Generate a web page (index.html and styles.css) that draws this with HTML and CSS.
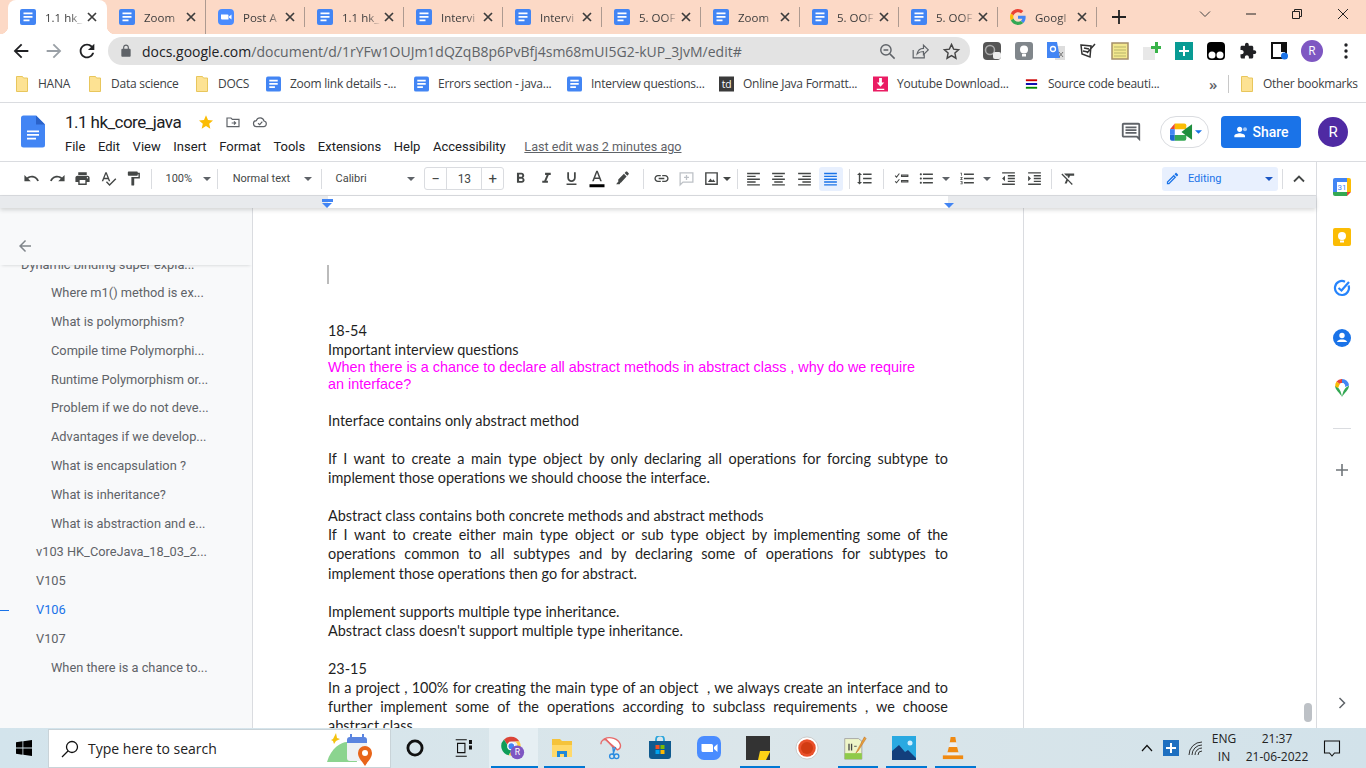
FILE: index.html
```html
<!DOCTYPE html>
<html lang="en">
<head>
  <meta charset="UTF-8" />
  <title>1.1 hk_core_java - Google Docs</title>
  <link rel="stylesheet" href="styles.css">
</head>
<body>

  <!-- shared icons -->
  <svg class="defs" width="0" height="0">
    <symbol id="doc" viewBox="0 0 16 16">
      <rect width="16" height="16" rx="2" fill="#4285f4"/>
      <path d="M3.5 3.5h9v1.7h-9zM3.5 7h9v1.7h-9zM3.5 10.5h6v1.7h-6z" fill="#fff"/>
    </symbol>
    <symbol id="folder" viewBox="0 0 12 16">
      <path d="M.5.5h6l1 1.5h4v13.5h-11z" fill="#fde293" stroke="#e8c65c"/>
    </symbol>
    <symbol id="x" viewBox="0 0 12 12">
      <path d="M2 2l8 8M10 2l-8 8" stroke="#3c3c3c" stroke-width="1.7" fill="none"/>
    </symbol>
    <symbol id="caret" viewBox="0 0 10 5">
      <path d="M0 0h10L5 5z"/>
    </symbol>
    <symbol id="g" viewBox="0 0 48 48">
      <path fill="#EA4335" d="M24 9.5c3.54 0 6.71 1.22 9.21 3.6l6.85-6.85C35.9 2.38 30.47 0 24 0 14.62 0 6.51 5.38 2.56 13.22l7.98 6.19C12.43 13.72 17.74 9.5 24 9.5z"/>
      <path fill="#4285F4" d="M46.98 24.55c0-1.57-.15-3.09-.38-4.55H24v9.02h12.94c-.58 2.96-2.26 5.48-4.78 7.18l7.73 6c4.51-4.18 7.09-10.36 7.09-17.65z"/>
      <path fill="#FBBC05" d="M10.53 28.59c-.48-1.45-.76-2.99-.76-4.59s.27-3.14.76-4.59l-7.98-6.19C.92 16.46 0 20.12 0 24c0 3.88.92 7.54 2.56 10.78l7.97-6.19z"/>
      <path fill="#34A853" d="M24 48c6.48 0 11.93-2.13 15.89-5.81l-7.73-6c-2.15 1.45-4.92 2.3-8.16 2.3-6.26 0-11.57-4.22-13.47-9.91l-7.98 6.19C6.51 42.62 14.62 48 24 48z"/>
    </symbol>
  </svg>

  <!-- tab strip -->
  <div class="tabstrip">
    <div class="tabs">
      <div class="tab active"><svg class="favicon"><use href="#doc"/></svg><span class="tab-title">1.1 hk_</span><svg class="tab-x"><use href="#x"/></svg></div>
      <div class="tab nosep"><svg class="favicon"><use href="#doc"/></svg><span class="tab-title">Zoom</span><svg class="tab-x"><use href="#x"/></svg></div>
      <div class="tab"><svg class="favicon" viewBox="0 0 16 16"><rect width="16" height="16" rx="4" fill="#4a8cff"/><path d="M3 5.5h6.5a1 1 0 0 1 1 1v4H4a1 1 0 0 1-1-1zM11 7.500l2.500-2v5l-2.500-2z" fill="#fff"/></svg><span class="tab-title">Post A</span><svg class="tab-x"><use href="#x"/></svg></div>
      <div class="tab"><svg class="favicon"><use href="#doc"/></svg><span class="tab-title">1.1 hk_</span><svg class="tab-x"><use href="#x"/></svg></div>
      <div class="tab"><svg class="favicon"><use href="#doc"/></svg><span class="tab-title">Intervi</span><svg class="tab-x"><use href="#x"/></svg></div>
      <div class="tab"><svg class="favicon"><use href="#doc"/></svg><span class="tab-title">Intervi</span><svg class="tab-x"><use href="#x"/></svg></div>
      <div class="tab"><svg class="favicon"><use href="#doc"/></svg><span class="tab-title">5. OOF</span><svg class="tab-x"><use href="#x"/></svg></div>
      <div class="tab"><svg class="favicon"><use href="#doc"/></svg><span class="tab-title">Zoom</span><svg class="tab-x"><use href="#x"/></svg></div>
      <div class="tab"><svg class="favicon"><use href="#doc"/></svg><span class="tab-title">5. OOF</span><svg class="tab-x"><use href="#x"/></svg></div>
      <div class="tab"><svg class="favicon"><use href="#doc"/></svg><span class="tab-title">5. OOF</span><svg class="tab-x"><use href="#x"/></svg></div>
      <div class="tab"><svg class="favicon"><use href="#g"/></svg><span class="tab-title">Googl</span><svg class="tab-x"><use href="#x"/></svg></div>
    </div>
    <svg class="newtab" viewBox="0 0 14 14"><path d="M7 0v14M0 7h14" stroke="#222" stroke-width="1.8"/></svg>
    <div class="winbtns">
      <svg viewBox="0 0 12 12"><path d="M1 3.5l5 5 5-5" fill="none" stroke="#444"/></svg>
      <svg viewBox="0 0 12 12"><path d="M1 6h10" stroke="#222"/></svg>
      <svg viewBox="0 0 12 12"><path d="M1.5 3.5h7v7h-7zM3.5 3.5v-2h7v7h-2" fill="none" stroke="#222"/></svg>
      <svg viewBox="0 0 12 12"><path d="M1 1l10 10M11 1L1 11" stroke="#222"/></svg>
    </div>
  </div>

  <!-- address bar -->
  <div class="navbar">
    <div class="navbtns">
      <svg viewBox="0 0 24 24" fill="#202124"><path d="M20 11H7.83l5.59-5.59L12 4l-8 8 8 8 1.41-1.41L7.83 13H20v-2z"/></svg>
      <svg viewBox="0 0 24 24" fill="#9aa0a6"><path d="M12 4l-1.41 1.41L16.17 11H4v2h12.17l-5.58 5.59L12 20l8-8z"/></svg>
      <svg viewBox="0 0 24 24" fill="#202124"><path d="M17.65 6.35C16.2 4.9 14.21 4 12 4c-4.42 0-7.99 3.58-7.99 8s3.57 8 7.99 8c3.73 0 6.84-2.55 7.73-6h-2.08c-.82 2.33-3.04 4-5.65 4-3.31 0-6-2.69-6-6s2.69-6 6-6c1.66 0 3.14.69 4.22 1.78L13 11h7V4l-2.35 2.35z"/></svg>
    </div>
    <div class="omnibox">
      <svg class="lock" viewBox="0 0 24 24" fill="#5f6368"><path d="M18 8h-1V6c0-2.76-2.24-5-5-5S7 3.24 7 6v2H6c-1.1 0-2 .9-2 2v10c0 1.1.9 2 2 2h12c1.1 0 2-.9 2-2V10c0-1.1-.9-2-2-2zM9 6c0-1.66 1.34-3 3-3s3 1.34 3 3v2H9V6z"/></svg>
      <span class="url"><b>docs.google.com</b>/document/d/1rYFw1OUJm1dQZqB8p6PvBfj4sm68mUI5G2-kUP_3JvM/edit#</span>
      <div class="omni-icons">
        <svg viewBox="0 0 24 24" fill="none" stroke="#5f6368" stroke-width="1.8"><circle cx="10" cy="10" r="6.5"/><path d="M15 15l6 6M7 10h6"/></svg>
        <svg viewBox="0 0 24 24" fill="none" stroke="#5f6368" stroke-width="1.5"><path d="M4 10v10h14v-5M9 15c1-5 5-7 8-7V4l6 6-6 6v-4c-3 0-6 1-8 3z"/></svg>
        <svg viewBox="0 0 24 24" fill="none" stroke="#444" stroke-width="1.8"><path d="M12 3l2.7 6 6.3.7-4.7 4.3 1.3 6.5L12 17.200 6.400 20.500 7.700 14 3 9.700 9.300 9z"/></svg>
      </div>
    </div>
    <div class="extensions">
      <span class="ext"><svg viewBox="0 0 18 18"><rect width="18" height="18" rx="4" fill="#555"/><circle cx="7" cy="8" r="4.5" fill="none" stroke="#aaa" stroke-width="1.5"/><rect x="10" y="10" width="8" height="7" rx="2" fill="#eee"/></svg></span>
      <span class="ext"><svg viewBox="0 0 18 18"><rect width="18" height="18" rx="3" fill="#80868b"/><circle cx="9" cy="7.5" r="4" fill="#fff"/><rect x="7" y="12" width="4" height="2.5" fill="#fff"/></svg></span>
      <span class="ext"><svg viewBox="0 0 18 18"><path d="M8 4h10v14H8z" fill="#ddd"/><path d="M0 0h10l3 16H0z" fill="#4285f4"/><circle cx="6" cy="7" r="2.5" fill="none" stroke="#fff" stroke-width="1.3"/><path d="M12 10l4 5M16 10l-4 5" stroke="#777"/></svg></span>
      <span class="ext"><svg viewBox="0 0 18 18" fill="none" stroke="#333" stroke-width="1.5"><path d="M2 3l10 1-1 11-8-3zM5 6l5 1M4 9l5 1M16 2L8 11"/></svg></span>
      <span class="ext"><svg viewBox="0 0 18 18"><rect x="1" y="1" width="16" height="16" fill="#f3e88f" stroke="#a58e6a" stroke-width="1.5"/><path d="M3 5h12M3 8h12M3 11h12M3 14h12" stroke="#b7b36b"/></svg></span>
      <span class="ext"><svg viewBox="0 0 18 18"><path d="M0 5h12v13H0z" fill="#e8e8e8"/><path d="M12 0v4h-4v3h4v4h3V7h3V4h-3V0z" fill="#38b349"/></svg></span>
      <span class="ext"><svg viewBox="0 0 18 18"><rect width="18" height="18" fill="#089b94"/><path d="M9 4v10M4 9h10" stroke="#fff" stroke-width="2"/></svg></span>
      <span class="ext"><svg viewBox="0 0 18 18"><rect width="18" height="18" rx="4" fill="#000"/><circle cx="5" cy="13" r="3.5" fill="#fff"/><circle cx="13" cy="13" r="3.5" fill="#fff"/></svg></span>
      <span class="ext"><svg viewBox="0 0 24 24" fill="#202124"><path d="M20.5 11H19V7c0-1.1-.9-2-2-2h-4V3.5C13 2.12 11.88 1 10.5 1S8 2.12 8 3.5V5H4c-1.1 0-1.99.9-1.99 2v3.8H3.5c1.49 0 2.7 1.21 2.7 2.7s-1.21 2.7-2.7 2.7H2V20c0 1.1.9 2 2 2h3.8v-1.5c0-1.49 1.21-2.7 2.7-2.7 1.49 0 2.7 1.21 2.7 2.7V22H17c1.1 0 2-.9 2-2v-4h1.5c1.38 0 2.5-1.12 2.5-2.5S21.88 11 20.5 11z"/></svg></span>
      <span class="ext"><svg viewBox="0 0 18 18"><path d="M1 1h14v15H1z" fill="#fff" stroke="#111" stroke-width="2"/><path d="M10 1h5v9h-5z" fill="#111"/><circle cx="13.5" cy="14" r="3.5" fill="#1a73e8"/></svg></span>
    </div>
    <div class="profile">R</div>
    <svg class="dots" viewBox="0 0 4 16"><circle cx="2" cy="2" r="1.7"/><circle cx="2" cy="8" r="1.7"/><circle cx="2" cy="14" r="1.7"/></svg>
  </div>

  <!-- bookmarks -->
  <div class="bookmarks">
    <span class="bm bm-folder bm-hana"><svg><use href="#folder"/></svg>HANA</span>
    <span class="bm bm-folder bm-ds"><svg><use href="#folder"/></svg>Data science</span>
    <span class="bm bm-folder bm-docs"><svg><use href="#folder"/></svg>DOCS</span>
    <span class="bm bm-zoom"><svg><use href="#doc"/></svg>Zoom link details -...</span>
    <span class="bm bm-err"><svg><use href="#doc"/></svg>Errors section - java...</span>
    <span class="bm bm-int"><svg><use href="#doc"/></svg>Interview questions...</span>
    <span class="bm bm-td"><svg viewBox="0 0 16 16"><rect width="16" height="16" fill="#3a3a3a"/><text x="8" y="12" class="td-text">td</text></svg>Online Java Formatt...</span>
    <span class="bm bm-yt"><svg viewBox="0 0 16 16"><rect width="16" height="16" fill="#ea1c63"/><path d="M6.5 1.5h3v5h2.500L8 11 4 6.500h2.500zM4 13h8v1.500H4z" fill="#fff"/></svg>Youtube Download...</span>
    <span class="bm bm-src"><svg viewBox="0 0 16 16"><path d="M2 3h12v2H2z" fill="#c00"/><path d="M2 7h12v2H2z" fill="#00a"/><path d="M2 11h12v2H2z" fill="#080"/></svg>Source code beauti...</span>
    <span class="bm-more">»</span>
    <span class="bm-sep"></span>
    <span class="bm bm-folder"><svg><use href="#folder"/></svg>Other bookmarks</span>
  </div>

  <!-- docs header -->
  <div class="docs-head">
    <svg class="docs-logo" viewBox="0 0 24 32">
      <path d="M15 0H2.5A2.5 2.5 0 0 0 0 2.5v27A2.5 2.5 0 0 0 2.5 32h19a2.5 2.5 0 0 0 2.5-2.5V9z" fill="#4285f4"/>
      <path d="M15 0l9 9h-9z" fill="#2a62c9"/>
      <path d="M6 15h12v1.7H6zM6 18.6h12v1.7H6zM6 22.2h9v1.7H6z" fill="#fff"/>
    </svg>
    <div class="docs-title">
      <div class="title-row">
        <span class="doc-name">1.1 hk_core_java</span>
        <svg viewBox="0 0 24 24" fill="#fbbc04"><path d="M12 2l3 6.9 7.500.7-5.700 5 1.700 7.400L12 18.100 5.500 22l1.700-7.400-5.700-5L9 8.900z"/></svg>
        <svg viewBox="0 0 24 24" fill="none" stroke="#5f6368" stroke-width="1.8"><path d="M3 6h6l2 2h10v11H3zM10 13.5h6M13.5 11l2.5 2.5-2.5 2.5"/></svg>
        <svg viewBox="0 0 24 24" fill="none" stroke="#5f6368" stroke-width="1.8"><path d="M7 19a4.5 4.5 0 0 1-.5-9 6 6 0 0 1 11.5.5A4.300 4.300 0 0 1 17.500 19zM9 14l2.500 2 4-4.500"/></svg>
      </div>
      <div class="menu-row">
        <span>File</span><span>Edit</span><span>View</span><span>Insert</span><span>Format</span><span>Tools</span><span>Extensions</span><span>Help</span><span>Accessibility</span>
        <span class="last-edit">Last edit was 2 minutes ago</span>
      </div>
    </div>
    <div class="head-actions">
      <svg class="comments" viewBox="0 0 24 24" fill="#5f6368"><path d="M21.99 4c0-1.1-.89-2-1.99-2H4c-1.1 0-2 .9-2 2v12c0 1.1.9 2 2 2h14l4 4-.01-18zM20 4v13.17L18.83 16H4V4h16zM6 12h12v2H6zm0-3h12v2H6zm0-3h12v2H6z"/></svg>
      <div class="meet">
        <svg viewBox="0 0 24 18">
          <path d="M0 6l5-6v6z" fill="#ea4335"/>
          <path d="M0 6h5v6H0z" fill="#4285f4"/>
          <path d="M0 12h5v6H2a2 2 0 0 1-2-2z" fill="#1967d2"/>
          <path d="M5 0h10a2 2 0 0 1 2 2v4H5z" fill="#fbbc04"/>
          <path d="M5 12h12v4a2 2 0 0 1-2 2H5z" fill="#34a853"/>
          <path d="M12 9l5-4v8zM17 5l6-4v16l-6-4z" fill="#1e8e3e"/>
        </svg>
        <svg class="meet-caret" fill="#1a73e8"><use href="#caret"/></svg>
      </div>
      <div class="share">
        <svg viewBox="0 0 24 24" fill="#fff"><path d="M10 12c2.21 0 4-1.79 4-4s-1.79-4-4-4-4 1.79-4 4 1.79 4 4 4zm0 2c-2.67 0-8 1.34-8 4v2h16v-2c0-2.66-5.33-4-8-4z"/><circle cx="18" cy="8" r="3" opacity=".6"/></svg>
        Share
      </div>
      <div class="account">R</div>
    </div>
  </div>

  <div class="docs-main">
    <div class="docs-left">

      <!-- formatting toolbar -->
      <div class="toolbar">
        <span class="tb"><svg viewBox="0 0 24 24"><path d="M12.5 8c-2.65 0-5.05.99-6.9 2.6L2 7v9h9l-3.62-3.62c1.39-1.16 3.16-1.88 5.12-1.88 3.54 0 6.55 2.31 7.6 5.5l2.37-.78C21.08 11.03 17.15 8 12.5 8z"/></svg></span>
        <span class="tb"><svg viewBox="0 0 24 24"><path d="M18.4 10.6C16.55 8.99 14.15 8 11.5 8c-4.65 0-8.58 3.03-9.96 7.22L3.9 16c1.05-3.19 4.05-5.5 7.6-5.5 1.95 0 3.73.72 5.12 1.88L13 16h9V7l-3.6 3.6z"/></svg></span>
        <span class="tb"><svg viewBox="0 0 24 24"><path d="M19 8H5c-1.66 0-3 1.34-3 3v6h4v4h12v-4h4v-6c0-1.66-1.34-3-3-3zm-3 11H8v-5h8v5zm3-7c-.55 0-1-.45-1-1s.45-1 1-1 1 .45 1 1-.45 1-1 1zm-1-9H6v4h12V3z"/></svg></span>
        <span class="tb"><svg viewBox="0 0 24 24"><path d="M12.45 16h2.09L9.43 3H7.57L2.46 16h2.09l1.12-3h5.64l1.14 3zm-6.02-5L8.5 5.48 10.57 11H6.43zm15.16.59l-8.09 8.09L9.83 16l-1.41 1.41 5.09 5.09L23 13l-1.41-1.41z"/></svg></span>
        <span class="tb"><svg viewBox="0 0 24 24"><path d="M18 4V3c0-.55-.45-1-1-1H5c-.55 0-1 .45-1 1v4c0 .55.45 1 1 1h12c.55 0 1-.45 1-1V6h1v4H9v11c0 .55.45 1 1 1h2c.55 0 1-.45 1-1v-9h8V4h-3z"/></svg></span>
        <span class="tb-sep"></span>
        <span class="tb-drop w-zoom">100%<svg><use href="#caret"/></svg></span>
        <span class="tb-sep"></span>
        <span class="tb-drop w-style">Normal text<svg><use href="#caret"/></svg></span>
        <span class="tb-sep"></span>
        <span class="tb-drop w-font">Calibri<svg><use href="#caret"/></svg></span>
        <span class="sizebox"><span>−</span><span class="size-val">13</span><span>+</span></span>
        <span class="tb b-first"><svg viewBox="0 0 24 24"><path d="M15.6 10.79c.97-.67 1.65-1.77 1.65-2.79 0-2.26-1.75-4-4-4H7v14h7.04c2.09 0 3.71-1.7 3.71-3.79 0-1.52-.86-2.82-2.15-3.42zM10 6.5h3c.83 0 1.5.67 1.5 1.5s-.67 1.5-1.5 1.5h-3v-3zm3.5 9H10v-3h3.5c.83 0 1.5.67 1.5 1.5s-.67 1.5-1.5 1.5z"/></svg></span>
        <span class="tb"><svg viewBox="0 0 24 24"><path d="M10 4v3h2.21l-3.42 8H6v3h8v-3h-2.21l3.42-8H18V4z"/></svg></span>
        <span class="tb"><svg viewBox="0 0 24 24"><path d="M12 17c3.31 0 6-2.69 6-6V3h-2.5v8c0 1.93-1.57 3.5-3.5 3.5S8.5 12.93 8.5 11V3H6v8c0 3.31 2.69 6 6 6zm-7 2v2h14v-2H5z"/></svg></span>
        <span class="tb tb-color"><svg viewBox="0 0 24 24"><path d="M11 1L5.5 15h2.25l1.12-3h6.25l1.12 3h2.25L13 1h-2zm-1.38 9L12 3.67 14.38 10H9.62z"/><path d="M2 19h20v4H2z" fill="#000"/></svg></span>
        <span class="tb tb-hl"><svg viewBox="0 0 24 24"><path d="M17.75 9L14 5.25l-8 8V17h-.5L3 20h5l1-2h.75zm2.96-2.96c.39-.39.39-1.02 0-1.41l-2.34-2.34c-.39-.39-1.02-.39-1.41 0L15 4.25 18.75 8z"/></svg></span>
        <span class="tb-sep"></span>
        <span class="tb"><svg viewBox="0 0 24 24"><path d="M3.9 12c0-1.71 1.39-3.1 3.1-3.1h4V7H7c-2.76 0-5 2.24-5 5s2.24 5 5 5h4v-1.9H7c-1.71 0-3.1-1.39-3.1-3.1zM8 13h8v-2H8v2zm9-6h-4v1.9h4c1.71 0 3.1 1.39 3.1 3.1s-1.39 3.1-3.1 3.1h-4V17h4c2.76 0 5-2.24 5-5s-2.24-5-5-5z"/></svg></span>
        <span class="tb faded"><svg viewBox="0 0 24 24"><path d="M3 4h18v13H7l-4 4zM12 7v7M8.5 10.5h7" fill="none" stroke="#bdc1c6" stroke-width="1.8"/></svg></span>
        <span class="tb tb-img"><svg viewBox="0 0 24 24"><path d="M4 4h16v16H4z" fill="none" stroke="#444746" stroke-width="2"/><path d="M7 17l3.5-5 2.5 3 1.5-2 3 4z"/></svg><svg class="img-caret"><use href="#caret"/></svg></span>
        <span class="tb-sep tight"></span>
        <span class="tb"><svg viewBox="0 0 24 24"><path d="M3 4h18v2H3zM3 8h12v2H3zM3 12h18v2H3zM3 16h12v2H3zM3 20h18v2H3z"/></svg></span>
        <span class="tb"><svg viewBox="0 0 24 24"><path d="M3 4h18v2H3zM6 8h12v2H6zM3 12h18v2H3zM6 16h12v2H6zM3 20h18v2H3z"/></svg></span>
        <span class="tb"><svg viewBox="0 0 24 24"><path d="M3 4h18v2H3zM9 8h12v2H9zM3 12h18v2H3zM9 16h12v2H9zM3 20h18v2H3z"/></svg></span>
        <span class="tb on"><svg viewBox="0 0 24 24"><path d="M3 4h18v2H3zM3 8h18v2H3zM3 12h18v2H3zM3 16h18v2H3zM3 20h18v2H3z"/></svg></span>
        <span class="tb-sep tight"></span>
        <span class="tb tb-spacing"><svg viewBox="0 0 24 24"><path d="M6 7h2.5L5 3.500 1.500 7H4v10H1.500L5 20.500 8.500 17H6V7zm4-2v2h12V5H10zm0 14h12v-2H10v2zm0-6h12v-2H10v2z"/></svg></span>
        <span class="tb-sep"></span>
        <span class="tb"><svg viewBox="0 0 24 24"><path d="M12 7h9v2h-9zM12 15h9v2h-9zM3 8l2 2 4-5M3 16l2 2 4-5" fill="none" stroke="#444746" stroke-width="1.5"/></svg></span>
        <span class="tb"><svg viewBox="0 0 24 24"><path d="M4 10.5c-.83 0-1.5.67-1.5 1.5s.67 1.5 1.5 1.5 1.5-.67 1.5-1.5-.67-1.5-1.5-1.5zm0-6c-.83 0-1.5.67-1.5 1.5S3.17 7.5 4 7.5 5.5 6.83 5.5 6 4.83 4.5 4 4.5zm0 12c-.83 0-1.5.68-1.5 1.5s.68 1.5 1.5 1.5 1.5-.68 1.5-1.5-.67-1.5-1.5-1.5zM7 19h14v-2H7v2zm0-6h14v-2H7v2zm0-8v2h14V5H7z"/></svg></span>
        <svg class="tb-caret"><use href="#caret"/></svg>
        <span class="tb"><svg viewBox="0 0 24 24"><path d="M2 17h2v.5H3v1h1v.5H2v1h3v-4H2v1zm1-9h1V4H2v1h1v3zm-1 3h1.8L2 13.1v.9h3v-1H3.2L5 10.9V10H2v1zm5-6v2h14V5H7zm0 14h14v-2H7v2zm0-6h14v-2H7v2z"/></svg></span>
        <svg class="tb-caret"><use href="#caret"/></svg>
        <span class="tb"><svg viewBox="0 0 24 24"><path d="M11 17h10v-2H11v2zm-8-5l4 4V8l-4 4zm0 9h18v-2H3v2zM3 3v2h18V3H3zm8 6h10V7H11v2zm0 4h10v-2H11v2z"/></svg></span>
        <span class="tb"><svg viewBox="0 0 24 24"><path d="M3 21h18v-2H3v2zM3 8v8l4-4-4-4zm8 9h10v-2H11v2zM3 3v2h18V3H3zm8 6h10V7H11v2zm0 4h10v-2H11v2z"/></svg></span>
        <span class="tb-sep"></span>
        <span class="tb"><svg viewBox="0 0 24 24"><path d="M3.27 5L2 6.27l6.97 6.97L6.5 19h3l1.57-3.66L16.73 21 18 19.73 3.55 5.27 3.27 5zM6 5v.18L8.82 8h2.4l-.72 1.68 2.1 2.1L14.21 8H20V5H6z"/></svg></span>
        <span class="editing">
          <svg class="pencil" viewBox="0 0 24 24"><path d="M3 17.25V21h3.75L17.81 9.94l-3.75-3.75L3 17.25zM5.9 19H5v-.9l9.06-9.06.9.9zM20.71 7.04c.39-.39.39-1.02 0-1.41l-2.34-2.34c-.39-.39-1.02-.39-1.41 0l-1.83 1.83 3.75 3.75 1.83-1.83z"/></svg>
          Editing
          <svg class="edit-caret"><use href="#caret"/></svg>
        </span>
        <span class="tb-sep"></span>
        <svg class="collapse" viewBox="0 0 12 8"><path d="M1 6.5l5-5 5 5" fill="none" stroke="#444746" stroke-width="1.8"/></svg>
      </div>

      <!-- ruler -->
      <div class="ruler">
        <span class="ruler-margin"></span>
        <span class="ruler-page"></span>
        <span class="ruler-margin grow"></span>
        <span class="indent-mark"></span>
        <span class="right-mark"></span>
      </div>

      <div class="workspace">
        <!-- outline -->
        <div class="outline">
          <div class="outline-head">
            <svg viewBox="0 0 24 24" fill="#80868b"><path d="M20 11H7.83l5.59-5.59L12 4l-8 8 8 8 1.41-1.41L7.83 13H20v-2z"/></svg>
          </div>
          <ul class="outline-list">
            <li class="lv0">Dynamic binding super expla...</li>
            <li class="lv2">Where m1() method is ex...</li>
            <li class="lv2">What is polymorphism?</li>
            <li class="lv2">Compile time Polymorphi...</li>
            <li class="lv2">Runtime Polymorphism or...</li>
            <li class="lv2">Problem if we do not deve...</li>
            <li class="lv2">Advantages if we develop...</li>
            <li class="lv2">What is encapsulation ?</li>
            <li class="lv2">What is inheritance?</li>
            <li class="lv2">What is abstraction and e...</li>
            <li class="lv1">v103 HK_CoreJava_18_03_2...</li>
            <li class="lv1">V105</li>
            <li class="lv1 current">V106</li>
            <li class="lv1">V107</li>
            <li class="lv2">When there is a chance to...</li>
          </ul>
        </div>

        <!-- page -->
        <div class="page">
          <span class="cursor"></span>
          <div class="ln">18-54</div>
          <div class="ln">Important interview questions</div>
          <div class="ln-q">When there is a chance to declare all abstract methods in abstract class , why do we require</div>
          <div class="ln-q">an interface?</div>
          <div class="gap"></div>
          <div class="ln">Interface contains only abstract method</div>
          <div class="gap"></div>
          <div class="ln just">If I want to create a main type object by only declaring all operations for forcing subtype to</div>
          <div class="ln">implement those operations we should choose the interface.</div>
          <div class="gap"></div>
          <div class="ln">Abstract class contains both concrete methods and abstract methods</div>
          <div class="ln just">If I want to create either main type object or sub type object by implementing some of the</div>
          <div class="ln just">operations common to all subtypes and by declaring some of operations for subtypes to</div>
          <div class="ln">implement those operations then go for abstract.</div>
          <div class="gap"></div>
          <div class="ln">Implement supports multiple type inheritance.</div>
          <div class="ln">Abstract class doesn't support multiple type inheritance.</div>
          <div class="gap"></div>
          <div class="ln">23-15</div>
          <div class="ln just">In a project , 100% for creating the main type of an object  , we always create an interface and to</div>
          <div class="ln just">further implement some of the operations according to subclass requirements , we choose</div>
          <div class="ln">abstract class</div>
        </div>

        <div class="gutter">
          <span class="thumb"></span>
        </div>
      </div>
    </div>

    <!-- side panel -->
    <div class="sidepanel">
      <svg viewBox="0 0 18 18">
        <path d="M0 4h18v10l-4 4H0z" fill="#fff"/>
        <path d="M4 0h10v4H4z" fill="#4285f4"/><path d="M0 2a2 2 0 0 1 2-2h2v14H0z" fill="#4285f4"/>
        <path d="M14 0h2a2 2 0 0 1 2 2v2h-4zM14 4h4v10h-4z" fill="#fbbc04"/>
        <path d="M0 14h14v4H2a2 2 0 0 1-2-2z" fill="#34a853"/><path d="M14 14h4l-4 4z" fill="#ea4335"/>
        <text x="9" y="12" class="cal-text">31</text>
      </svg>
      <svg viewBox="0 0 18 18"><rect width="18" height="18" rx="2" fill="#fbbc04"/><circle cx="9" cy="8" r="4" fill="#fff"/><rect x="7" y="12.5" width="4" height="2" fill="#fff"/></svg>
      <svg viewBox="0 0 18 18" fill="none" stroke="#2684fc" stroke-width="2.2"><path d="M15.5 6.5A7 7 0 1 1 12 2.700"/><path d="M5.500 9l3 2.500L16 3"/></svg>
      <svg viewBox="0 0 18 18"><circle cx="9" cy="9" r="9" fill="#1a73e8"/><circle cx="9" cy="6.5" r="2.7" fill="#fff"/><path d="M3.8 13c1-2 3-2.5 5.200-2.500s4.200.5 5.200 2.500z" fill="#fff"/></svg>
      <svg viewBox="0 0 14 18">
        <path d="M7 18C5 14 0 11 0 6.5L3.5 9C4.5 11 6 11.500 7 18z" fill="#34a853"/>
        <path d="M7 18c2-4 7-7 7-11.500L10.500 9C9.500 11 8 11.500 7 18z" fill="#34a853"/>
        <path d="M1.5 2.500L5 5 3 9 .3 7.500A7 7 0 0 1 1.500 2.500z" fill="#fbbc04"/>
        <path d="M1.5 2.500A7 7 0 0 1 7 0v4a3 3 0 0 0-2 1z" fill="#ea4335"/>
        <path d="M7 0a7 7 0 0 1 7 6.500L10 8a3 3 0 0 0-3-4z" fill="#4285f4"/>
        <circle cx="7" cy="6.5" r="2.4" fill="#fff"/>
      </svg>
      <span class="side-sep"></span>
      <svg class="side-plus" viewBox="0 0 12 12"><path d="M6 0v12M0 6h12" stroke="#70757a" stroke-width="1.6"/></svg>
      <svg class="side-hide" viewBox="0 0 8 12"><path d="M1.5 1l5 5-5 5" fill="none" stroke="#5f6368" stroke-width="1.5"/></svg>
    </div>
  </div>

  <!-- windows taskbar -->
  <div class="taskbar">
    <svg class="start" viewBox="0 0 16 16" fill="#000"><path d="M0 2.2l6.5-.9v6.3H0zM7.3 1.2L16 0v7.6H7.3zM0 8.4h6.5v6.3L0 13.8zM7.3 8.4H16V16l-8.7-1.2z"/></svg>
    <div class="searchbox">
      <svg class="search-ico" viewBox="0 0 18 18" fill="none" stroke="#111" stroke-width="1.3"><circle cx="11" cy="7" r="5.5"/><path d="M7 11l-6 6"/></svg>
      <span class="search-txt">Type here to search</span>
      <svg class="search-art" viewBox="0 0 48 34">
        <path d="M0 30C4 16 14 10 20 10s8 6 10 20z" fill="#8bd48f"/>
        <path d="M6 7l3-6 1 5 3 1-4 2-2 3-1-3-2-1z" fill="#f4c20d"/>
        <rect x="20" y="5" width="20" height="24" rx="3" fill="#eef1f4"/>
        <path d="M20 8a3 3 0 0 1 3-3h14a3 3 0 0 1 3 3v3H20z" fill="#5b85e0"/>
        <path d="M24 2v5M36 2v5" stroke="#5b85e0" stroke-width="2"/>
        <path d="M38 34c-3-5-7-8-7-13a7 7 0 0 1 14 0c0 5-4 8-7 13z" fill="#e8651a"/>
        <circle cx="38" cy="21" r="3" fill="#fff"/>
      </svg>
    </div>
    <div class="apps">
      <span class="app"><svg viewBox="0 0 22 22" fill="none" stroke="#111" stroke-width="2.6"><circle cx="11" cy="11" r="6.5"/></svg></span>
      <span class="app"><svg viewBox="-3 -3 26 26" fill="none" stroke="#111" stroke-width="1.2"><path d="M1 1h12M1 19h12M3 5h8v10H3z"/><path d="M16 2h2v3h-2zM16 8h2v3h-2z" fill="#111"/></svg></span>
      <span class="app running chrome-app">
        <svg viewBox="0 0 28 28">
          <path d="M12 1a11 11 0 0 1 9.5 5.5H12a5 5 0 0 0-4.800 3.500L3.500 4A11 11 0 0 1 12 1z" fill="#db4437"/>
          <path d="M3.5 4l4 6.500A5 5 0 0 0 12 17l-3 5.500A11 11 0 0 1 3.500 4z" fill="#0f9d58"/>
          <path d="M21.5 6.500A11 11 0 0 1 9 22.500l4-6.500a5 5 0 0 0 3-9.500z" fill="#ffcd40"/>
          <circle cx="12" cy="12" r="4" fill="#4285f4" stroke="#fff" stroke-width="1.2"/>
          <circle cx="19" cy="19" r="8" fill="#7e57c2"/>
          <text x="19" y="22" class="badge-r">R</text>
        </svg>
      </span>
      <span class="app running"><svg viewBox="0 0 24 24"><path d="M2 3h8l2 2h10v16H2z" fill="#f5c33b"/><path d="M2 9h20v12H2z" fill="#ffd96a"/><path d="M7 15h10v6h-3v-3h-4v3H7z" fill="#1f88d9"/></svg></span>
      <span class="app"><svg viewBox="0 0 26 26" fill="none"><path d="M6 3l14 12a5 5 0 0 0 3-6C21 3 12 0 6 3z" fill="#fff" stroke="#e66a6a" stroke-width="1.5"/><path d="M2 9c0-4 3-6 6-5l8 9" stroke="#e66a6a" stroke-width="1.5"/><path d="M15 12l1 8M18 12l-3 8" stroke="#2c8ce0" stroke-width="1.5"/><circle cx="14" cy="22" r="2.5" stroke="#2c8ce0" stroke-width="1.5"/><circle cx="19" cy="22" r="2.5" stroke="#2c8ce0" stroke-width="1.5"/></svg></span>
      <span class="app"><svg viewBox="0 0 24 24"><path d="M8 6V3.500a4 4 0 0 1 8 0V6" fill="none" stroke="#2aa5dc" stroke-width="1.8"/><path d="M1 5h22v15a3 3 0 0 1-3 3H4a3 3 0 0 1-3-3z" fill="#0f5a8f"/><path d="M7.500 9h4v4h-4z" fill="#f25022"/><path d="M12.500 9h4v4h-4z" fill="#7fba00"/><path d="M7.500 14h4v4h-4z" fill="#00a4ef"/><path d="M12.500 14h4v4h-4z" fill="#ffb900"/></svg></span>
      <span class="app"><svg viewBox="0 0 24 24"><rect width="24" height="24" rx="7" fill="#4a8cff"/><path d="M4.500 8h10a1.500 1.500 0 0 1 1.500 1.500V16H6a1.500 1.500 0 0 1-1.500-1.500zM17 11l3.500-3v8L17 13z" fill="#fff"/></svg></span>
      <span class="app running"><svg viewBox="0 0 24 24"><rect width="24" height="24" fill="#333"/><path d="M12 24l2-9h10v1l-4 8z" fill="#fcd116"/></svg></span>
      <span class="app"><svg viewBox="0 0 26 26"><circle cx="13" cy="13" r="12" fill="#fff" stroke="#c9c9c9"/><circle cx="13" cy="13" r="9.5" fill="#e9502a"/><circle cx="13" cy="13" r="6.5" fill="#d23b12"/></svg></span>
      <span class="app running"><svg viewBox="0 0 26 28"><path d="M1 3h16l4 3v21H1z" fill="#eef5c8" stroke="#a0a0a0"/><path d="M1 20h20v7H1z" fill="#8fca4a"/><path d="M6 9v8M9 9v8" stroke="#444" stroke-width="1.5"/><path d="M12 12h3" stroke="#444"/><path d="M24 1l-8 15-2 4 3-3L26 3z" fill="#e8a13a" stroke="#b05a1c" stroke-width=".5"/></svg></span>
      <span class="app running"><svg viewBox="0 0 24 24"><rect width="24" height="24" fill="#29a9e1"/><path d="M0 24V15l7-6 6 7 3-2 8 8v2z" fill="#133f7c"/><circle cx="18" cy="7" r="2.5" fill="#cfefff"/></svg></span>
      <span class="app running"><svg viewBox="0 0 24 26"><path d="M9.500 1h5l1 6h-7z" fill="#f08a12"/><path d="M8.500 7h7l1 5h-9z" fill="#eee"/><path d="M7.500 12h9l1.500 6H6z" fill="#f08a12"/><path d="M6 18h12l1 3H5z" fill="#eee"/><path d="M1 21h22v4H1z" fill="#f08a12"/></svg></span>
    </div>
    <div class="tray">
      <svg class="tray-up" viewBox="0 0 12 8"><path d="M1 7l5-5.500L11 7" fill="none" stroke="#111" stroke-width="1.2"/></svg>
      <svg class="tray-plus" viewBox="0 0 16 16"><rect width="16" height="16" fill="#1e6fc0"/><path d="M8 3v10M3 8h10" stroke="#fff" stroke-width="2"/></svg>
      <svg class="tray-wifi" viewBox="0 0 16 16" fill="none" stroke="#333"><path d="M2 15A13 13 0 0 1 15 2M5 15A10 10 0 0 1 15 5M8 15a7 7 0 0 1 7-7M11 15a4 4 0 0 1 4-4"/></svg>
      <div class="lang"><span>ENG</span><span>IN</span></div>
      <div class="clock"><span>21:37</span><span>21-06-2022</span></div>
      <svg class="notif" viewBox="0 0 18 18" fill="none" stroke="#111" stroke-width="1.1"><path d="M1.5 2h15v12h-5l-2.500 3-2.500-3h-5z"/></svg>
    </div>
  </div>

</body>
</html>
```

FILE: styles.css
```css
* { box-sizing: border-box; }

html, body { height: 100%; }

body {
  margin: 0;
  width: 1366px;
  height: 768px;
  overflow: hidden;
  display: flex;
  flex-direction: column;
  font-family: 'Open Sans', sans-serif;
  color: #202124;
  background: #fff;
}

.defs { position: absolute; }

svg { display: block; flex: none; }

/* === Tabs === */
.tabstrip {
  height: 34px;
  flex: none;
  background: #fcd9c6;
  display: flex;
  align-items: center;
}

.tabs {
  display: flex;
  padding-left: 8px;
  height: 34px;
}

.tab {
  position: relative;
  width: 99px;
  height: 34px;
  padding: 0 8px 0 12px;
  display: flex;
  align-items: center;
  border-right: 1px solid #ad9a90;
  border-image: linear-gradient(to bottom, transparent 8px, #ad9a90 8px, #ad9a90 26px, transparent 26px) 1;
}

.tab.nosep { border-image: none; }

.tab.active {
  background: #fff;
  border: none;
  border-radius: 8px 8px 0 0;
}

.tab.active::before,
.tab.active::after {
  content: "";
  position: absolute;
  bottom: 0;
  width: 8px;
  height: 8px;
}

.tab.active::before {
  left: -8px;
  background: radial-gradient(circle at 0 0, transparent 8px, #fff 8.5px);
}

.tab.active::after {
  right: -8px;
  background: radial-gradient(circle at 100% 0, transparent 8px, #fff 8.5px);
}

.favicon { width: 16px; height: 16px; margin-right: 9px; }

.tab-title {
  width: 39px;
  overflow: hidden;
  white-space: nowrap;
  font-size: 11.5px;
  color: #3c3c3c;
  -webkit-mask-image: linear-gradient(to right, #000 65%, transparent);
  mask-image: linear-gradient(to right, #000 65%, transparent);
}

.tab-x { width: 12px; height: 12px; margin-left: 2px; }

.newtab { width: 14px; height: 14px; margin-left: 15px; }

.winbtns {
  margin-left: auto;
  margin-right: 17px;
  margin-top: -6px;
  display: flex;
  gap: 34px;
}

.winbtns svg { width: 12px; height: 12px; }

/* === Address bar === */
.navbar {
  height: 34px;
  flex: none;
  display: flex;
  align-items: center;
  background: #fff;
}

.navbtns {
  display: flex;
  width: 108px;
  padding-left: 10px;
  gap: 11px;
}

.navbtns svg { width: 22px; height: 22px; }

.omnibox {
  width: 862px;
  height: 28px;
  border-radius: 14px;
  background: #e3e3e3;
  display: flex;
  align-items: center;
  padding-left: 11px;
}

.lock { width: 14px; height: 14px; margin-right: 9px; }

.url {
  font-size: 14px;
  color: #5f6368;
  white-space: nowrap;
}

.url b { font-weight: 400; color: #202124; }

.omni-icons {
  margin-left: auto;
  margin-right: 9px;
  display: flex;
  gap: 13px;
}

.omni-icons svg { width: 19px; height: 19px; }

.extensions {
  display: flex;
  padding-left: 6px;
}

.ext {
  width: 32px;
  display: flex;
  justify-content: center;
}

.ext svg { width: 18px; height: 18px; }

.profile {
  width: 22px;
  height: 22px;
  margin-left: 5px;
  border-radius: 50%;
  background: #7e57c2;
  color: #fff;
  font-size: 12px;
  line-height: 22px;
  text-align: center;
}

.dots { width: 4px; height: 16px; margin-left: 21px; fill: #202124; }

/* === Bookmarks === */
.bookmarks {
  height: 35px;
  flex: none;
  padding-bottom: 3px;
  display: flex;
  align-items: center;
  background: #fff;
  border-bottom: 1px solid #dadce0;
  font-size: 12px;
  letter-spacing: -.25px;
  color: #3c4043;
}

.bm {
  display: flex;
  align-items: center;
  white-space: nowrap;
}

.bm svg { width: 15px; height: 16px; margin-right: 9px; }

.bm-folder svg { width: 12px; margin-right: 10px; }

.bm-hana { margin-left: 16px; width: 73px; }
.bm-ds { width: 107px; }
.bm-docs { width: 70px; }
.bm-zoom { width: 148px; }
.bm-err { width: 153px; }
.bm-int { width: 152px; }
.bm-td { width: 154px; }
.bm-yt { width: 151px; }
.bm-src { width: 185px; }

.td-text { font-size: 11px; fill: #fff; text-anchor: middle; }

.bm-more { width: 19px; color: #5f6368; font-size: 15px; font-weight: 600; }

.bm-sep {
  width: 1px;
  height: 18px;
  margin-right: 12px;
  background: #c8c8c8;
}

/* === Docs header === */
.docs-head {
  height: 59px;
  flex: none;
  display: flex;
  background: #fff;
  border-bottom: 1px solid #dadce0;
}

.docs-logo { width: 24px; height: 33px; margin: 12px 0 0 21px; }

.docs-title { margin-left: 20px; padding-top: 7px; }

.title-row {
  display: flex;
  align-items: center;
  height: 24px;
  gap: 11px;
}

.title-row svg { width: 16px; height: 16px; }

.doc-name {
  font-family: 'Roboto', sans-serif;
  font-size: 17px;
  letter-spacing: -.55px;
  color: #202124;
  margin-right: 6px;
}

.menu-row {
  display: flex;
  align-items: center;
  gap: 12.6px;
  margin-top: 5px;
  font-family: 'Roboto', sans-serif;
  font-size: 13px;
  color: #202124;
}

.last-edit {
  margin-left: 6px;
  font-size: 12.6px;
  color: #5f6368;
  text-decoration: underline;
}

.head-actions {
  margin-left: auto;
  display: flex;
  align-items: center;
  height: 58px;
}

.comments { width: 22px; height: 22px; margin-right: 18px; }

.meet {
  width: 49px;
  height: 32px;
  border: 1px solid #dadce0;
  border-radius: 16px;
  display: flex;
  align-items: center;
  padding-left: 9px;
  gap: 2px;
}

.meet svg:first-child { width: 23px; height: 18px; }

.meet-caret { width: 7px; height: 4px; }

.share {
  width: 80px;
  height: 32px;
  margin-left: 12px;
  border-radius: 4px;
  background: #1a73e8;
  color: #fff;
  font-family: 'Roboto', sans-serif;
  font-size: 14px;
  font-weight: 500;
  display: flex;
  align-items: center;
  justify-content: center;
  gap: 3px;
}

.share svg { width: 16px; height: 16px; }

.account {
  width: 30px;
  height: 30px;
  margin: 0 18px 0 17px;
  border-radius: 50%;
  background: #4f2aa3;
  color: #fff;
  font-family: 'Roboto', sans-serif;
  font-size: 15px;
  line-height: 30px;
  text-align: center;
}

/* === Docs body === */
.docs-main {
  flex: 1;
  min-height: 0;
  display: flex;
}

.docs-left {
  width: 1316px;
  display: flex;
  flex-direction: column;
}

.toolbar {
  height: 34px;
  flex: none;
  display: flex;
  align-items: center;
  padding-left: 19px;
  border-bottom: 1px solid #dadce0;
  font-family: 'Roboto', sans-serif;
  font-size: 11px;
  color: #444746;
}

.tb {
  width: 25.5px;
  height: 24px;
  display: flex;
  align-items: center;
  justify-content: center;
  flex: none;
}

.tb svg { width: 17px; height: 17px; fill: #444746; }

.tb-color svg { width: 18px; height: 20px; }

.tb-hl { margin-right: 4px; }

.tb-spacing { margin-right: 2px; }

.tb.on {
  width: 24px;
  margin: 0 2px;
  background: #e8f0fe;
  border-radius: 3px;
}

.tb.on svg { fill: #1a73e8; }

.tb-img { width: 34px; justify-content: flex-start; padding-left: 4px; }

.tb .img-caret { width: 8px; height: 4px; margin-left: 3px; }

.tb-sep {
  width: 1px;
  height: 20px;
  margin: 0 4px;
  flex: none;
  background: #dadce0;
}

.tb-sep.tight { margin-right: 2px; }

.tb-drop {
  display: flex;
  align-items: center;
  justify-content: space-between;
  height: 24px;
  flex: none;
}

.tb-drop svg, .tb-caret, .edit-caret { width: 8px; height: 4px; fill: #5f6368; }

.tb-caret { margin: 0 4.5px 0 3px; flex: none; }

.w-zoom { width: 57.5px; padding: 0 2.5px 0 10px; }
.w-style { width: 94.7px; padding: 0 4.7px 0 10.7px; }
.w-font { width: 95.7px; padding: 0 6.4px 0 9.8px; }

.sizebox {
  width: 80px;
  height: 23px;
  flex: none;
  display: flex;
  border: 1px solid #dadce0;
  border-radius: 3px;
  margin-left: 3px;
}

.sizebox span {
  flex: 1;
  display: flex;
  align-items: center;
  justify-content: center;
  font-size: 15px;
}

.sizebox .size-val {
  flex: none;
  width: 36px;
  font-size: 12px;
  border-left: 1px solid #dadce0;
  border-right: 1px solid #dadce0;
}

.b-first { margin-left: 3.5px; }

.editing {
  width: 116px;
  height: 24px;
  flex: none;
  margin-left: 80.5px;
  background: #e8f0fe;
  border-radius: 3px;
  color: #1a73e8;
  display: flex;
  align-items: center;
  padding: 0 5px 0 3px;
  gap: 8px;
}

.pencil { width: 15px; height: 15px; fill: #1a73e8; }

.edit-caret { margin-left: auto; fill: #1a56c4; }

.collapse { width: 12px; height: 8px; margin-left: 6px; }

/* ruler */
.ruler {
  position: relative;
  height: 12px;
  flex: none;
  display: flex;
  z-index: 2;
  box-shadow: 0 2px 4px rgba(60, 64, 67, .2);
}

.ruler-margin { width: 328px; background: #e8eaed; }
.ruler-margin.grow { flex: 1; }
.ruler-page { width: 620px; background: #fff; }

.indent-mark {
  position: absolute;
  left: 322px;
  top: 3px;
  width: 11px;
  height: 3px;
  background: #4285f4;
}

.indent-mark::after,
.right-mark {
  content: "";
  border-top: 5px solid #4285f4;
  border-left: 5.5px solid transparent;
  border-right: 5.5px solid transparent;
}

.indent-mark::after {
  position: absolute;
  top: 4px;
  left: 0;
}

.right-mark {
  position: absolute;
  left: 944px;
  top: 7px;
}

/* workspace */
.workspace {
  flex: 1;
  min-height: 0;
  display: flex;
  background: #fff;
}

.outline {
  width: 253px;
  flex: none;
  background: #f8f9fa;
  border-right: 1px solid #dadce0;
  overflow: hidden;
}

.outline-head {
  position: relative;
  z-index: 1;
  height: 57px;
  padding: 29px 0 0 16px;
  background: #f8f9fa;
  box-shadow: 0 2px 3px -2px rgba(60, 64, 67, .25);
}

.outline-head svg { width: 18px; height: 18px; }

.outline-list {
  list-style: none;
  margin: -14.5px 0 0 0;
  padding: 0;
  font-family: 'Roboto', sans-serif;
  font-size: 12.8px;
  color: #5f6368;
}

.outline-list li {
  position: relative;
  height: 28.8px;
  line-height: 28.8px;
  white-space: nowrap;
}

.lv0 { padding-left: 21px; }
.lv1 { padding-left: 36px; }
.lv2 { padding-left: 51px; }

.outline-list .current { color: #1a73e8; }

.current::before {
  content: "";
  position: absolute;
  left: 0;
  top: 14px;
  width: 9px;
  height: 1px;
  background: #1a73e8;
}

.page {
  position: relative;
  width: 771px;
  flex: none;
  padding: 113px 75px 0 75px;
  border-right: 1px solid #dadce0;
  overflow: hidden;
}

.cursor {
  position: absolute;
  left: 74px;
  top: 57px;
  width: 1.5px;
  height: 19px;
  background: #bbb;
}

.ln {
  font-family: 'Lato', sans-serif;
  font-size: 14.45px;
  line-height: 19.05px;
  height: 19.05px;
  color: #1f1f1f;
  white-space: pre-wrap;
}

.just {
  text-align: justify;
  text-align-last: justify;
}

.ln-q {
  font-family: 'Liberation Sans', sans-serif;
  font-size: 14.4px;
  line-height: 16.5px;
  color: #ff00ff;
}

.gap { height: 19.05px; }

.gutter {
  position: relative;
  flex: 1;
}

.thumb {
  position: absolute;
  right: 4px;
  top: 495px;
  width: 8px;
  height: 19px;
  border-radius: 4px;
  background: #bdc1c6;
}

/* === Side panel === */
.sidepanel {
  position: relative;
  width: 50px;
  flex: none;
  border-left: 1px solid #dadce0;
  display: flex;
  flex-direction: column;
  align-items: center;
  padding-top: 16px;
  gap: 32.3px;
  background: #fff;
}

.sidepanel svg { width: 18px; height: 18px; }

.cal-text {
  font-family: 'Roboto', sans-serif;
  font-size: 8px;
  fill: #4285f4;
  text-anchor: middle;
}

.side-sep {
  width: 18px;
  height: 1px;
  margin-top: -1px;
  background: #dadce0;
}

.sidepanel .side-plus { width: 12px; height: 12px; margin-top: 2px; }

.sidepanel .side-hide {
  position: absolute;
  left: 21px;
  top: 535px;
  width: 8px;
  height: 12px;
}

/* === Taskbar === */
.taskbar {
  height: 40px;
  flex: none;
  display: flex;
  align-items: center;
  background: linear-gradient(to right, #d3e4ec, #dbe6ea 55%, #d2e2ea);
  color: #111;
}

.start { width: 16px; height: 16px; margin-left: 16px; }

.searchbox {
  width: 343px;
  height: 39px;
  margin: 1px 0 0 16px;
  background: #fff;
  border: 1px solid #c9d3d8;
  display: flex;
  align-items: center;
}

.search-ico { width: 18px; height: 18px; margin-left: 12px; }

.search-txt {
  margin-left: 9px;
  font-size: 14px;
  color: #222;
}

.search-art { width: 48px; height: 34px; margin-left: auto; margin-right: 15px; }

.apps { display: flex; height: 40px; }

.app {
  position: relative;
  width: 48.9px;
  height: 40px;
  display: flex;
  align-items: center;
  justify-content: center;
}

.app svg { width: 24px; height: 24px; }

.chrome-app { background: #e6eff3; }

.running::after {
  content: "";
  position: absolute;
  left: 6.5px;
  right: 2px;
  bottom: 0;
  height: 2px;
  background: #0078d4;
}

.chrome-app::after { left: 2px; right: 0; }

.tray {
  margin-left: auto;
  display: flex;
  align-items: center;
  height: 40px;
}

.tray-up { width: 12px; height: 8px; }
.tray-plus { width: 16px; height: 16px; margin-left: 10px; }
.tray-wifi { width: 16px; height: 16px; margin-left: 8px; }

.lang, .clock {
  display: flex;
  flex-direction: column;
  align-items: center;
  font-size: 12px;
  line-height: 18px;
  color: #222;
}

.lang { width: 30px; margin-left: 6px; }
.clock { width: 66px; margin-left: 5px; }

.notif { width: 18px; height: 18px; margin: 0 25px 0 13px; }

.badge-r {
  font-family: 'Roboto', sans-serif;
  font-size: 10px;
  fill: #fff;
  text-anchor: middle;
}
```
